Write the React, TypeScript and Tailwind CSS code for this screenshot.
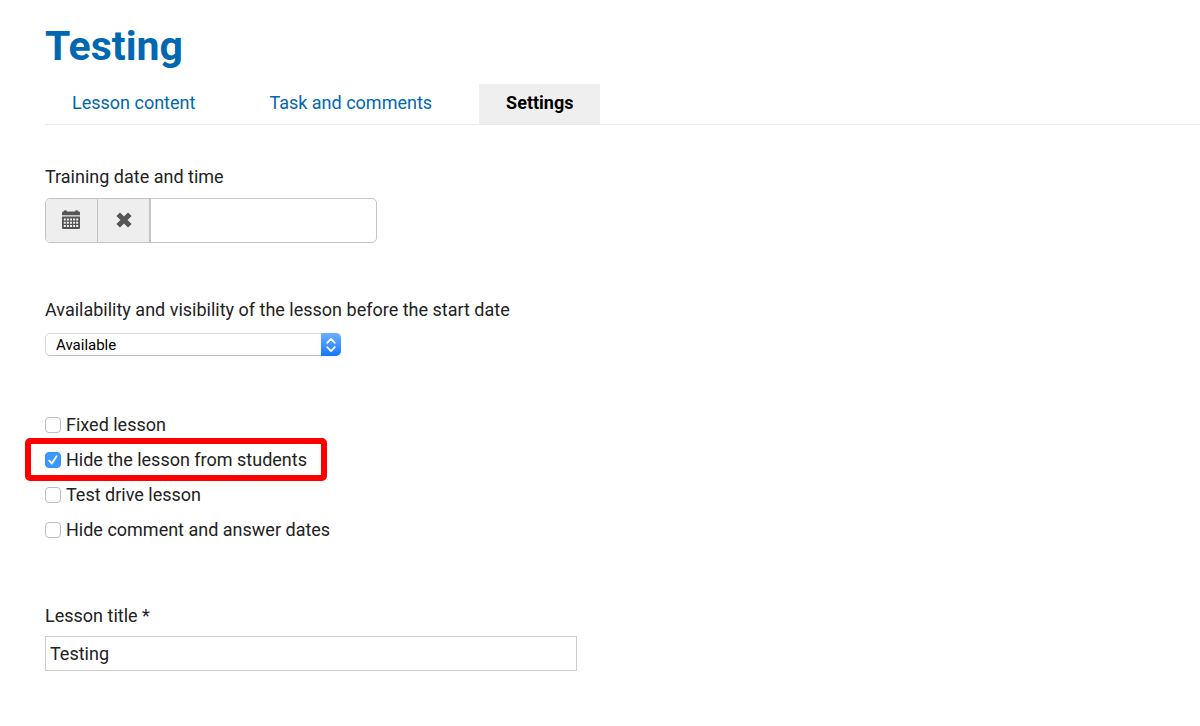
import { useState } from "react";

const tabs = ["Lesson content", "Task and comments", "Settings"];

const options = [
  { id: "fixed", label: "Fixed lesson", checked: false, highlight: false },
  { id: "hide-lesson", label: "Hide the lesson from students", checked: true, highlight: true },
  { id: "test-drive", label: "Test drive lesson", checked: false, highlight: false },
  { id: "hide-dates", label: "Hide comment and answer dates", checked: false, highlight: false },
];

function CalendarIcon() {
  return (
    <svg viewBox="0 0 18 20" className="h-5 w-[18px]" fill="#555" aria-hidden="true">
      <path d="M1.8 1.6Q1.8.2 3.4.2T5 1.6h8Q13 .2 14.6.2t1.6 1.4h.6q1.2 0 1.2 1.2v2.4H0V2.8q0-1.2 1.2-1.2z" />
      <path
        fillRule="evenodd"
        d="M0 6.5h18V18q0 1-1 1H1q-1 0-1-1zM1.8 8.6h2v2h-2zm3.1 0h2v2h-2zm3.1 0h2v2H8zm3.1 0h2v2h-2zm3.1 0h2v2h-2zM1.8 11.8h2v2h-2zm3.1 0h2v2h-2zm3.1 0h2v2H8zm3.1 0h2v2h-2zm3.1 0h2v2h-2zM1.8 15h2v2h-2zm3.1 0h2v2h-2zM8 15h2v2H8zm3.1 0h2v2h-2zm3.1 0h2v2h-2z"
      />
    </svg>
  );
}

function ClearIcon() {
  return (
    <svg viewBox="0 0 16 16" className="h-4 w-4" fill="none" stroke="#555" strokeWidth="5" aria-hidden="true">
      <path d="M2.2 2.2l11.6 11.6M13.8 2.2L2.2 13.8" />
    </svg>
  );
}

function TabBar() {
  const [active, setActive] = useState("Settings");

  return (
    <nav className="mt-[14px] flex gap-5 border-b border-[#ebebeb]">
      {tabs.map((tab) => (
        <a
          key={tab}
          href="#"
          onClick={() => setActive(tab)}
          className={
            tab === active
              ? "bg-[#efefef] px-[27px] pt-[7px] pb-[9px] font-bold text-black"
              : "px-[27px] pt-[7px] pb-[9px] text-[#0068b0]"
          }
        >
          {tab}
        </a>
      ))}
    </nav>
  );
}

function Option({ id, label, checked, highlight }: (typeof options)[number]) {
  return (
    <div className="relative flex h-[35px] w-fit items-center">
      {highlight && (
        <span className="pointer-events-none absolute -inset-x-5 -inset-y-1 rounded-[5px] border-[6px] border-[#ff0000]" />
      )}
      <span className="grid place-items-center">
        <input
          id={id}
          type="checkbox"
          defaultChecked={checked}
          className="peer col-start-1 row-start-1 h-4 w-4 appearance-none rounded-[4px] border border-[#bdbdbd] bg-white checked:border-[#3191f8] checked:bg-[#3b99fc]"
        />
        <svg
          viewBox="0 0 16 16"
          className="pointer-events-none invisible col-start-1 row-start-1 h-4 w-4 peer-checked:visible"
          fill="none"
          stroke="white"
          strokeWidth="1.8"
          strokeLinecap="round"
          strokeLinejoin="round"
          aria-hidden="true"
        >
          <path d="M4.2 8.6l2.6 3 4.8-7.4" />
        </svg>
      </span>
      <label htmlFor={id} className="pl-[5px]">
        {label}
      </label>
    </div>
  );
}

export default function App() {
  return (
    <main className="bg-white pt-[22px] pb-14 pl-[45px] font-[Roboto,sans-serif] text-[18px] leading-6 text-[#222]">
      <h1 className="text-[41px] leading-[48px] font-bold text-[#0068b0]">Testing</h1>
      <TabBar />

      <form>
        <div className="mt-10 flex flex-col items-start gap-[9px]">
          <label htmlFor="date">Training date and time</label>
          <div className="flex h-[45px] w-full max-w-[332px] overflow-hidden rounded-[5px] border border-[#c4c4c4]">
            <button
              type="button"
              aria-label="Pick date"
              className="flex w-[52px] shrink-0 items-center justify-center border-r border-[#c4c4c4] bg-[#eee] pr-px pb-px"
            >
              <CalendarIcon />
            </button>
            <button
              type="button"
              aria-label="Clear date"
              className="flex w-[53px] shrink-0 items-center justify-center border-r-2 border-[#c4c4c4] bg-[#eee] pb-px"
            >
              <ClearIcon />
            </button>
            <input id="date" type="text" className="min-w-0 flex-1 px-3 outline-none" />
          </div>
        </div>

        <div className="mt-[55px] flex flex-col items-start gap-[11px]">
          <label htmlFor="availability">Availability and visibility of the lesson before the start date</label>
          <div className="grid w-full max-w-[296px] items-center">
            <select
              id="availability"
              className="col-start-1 row-start-1 h-[23px] appearance-none rounded-[5px] border border-[#d9d9d9] border-b-[#bfbfbf] bg-white pl-[10px] text-[15px] leading-5 text-black"
            >
              <option>Available</option>
            </select>
            <span className="pointer-events-none relative col-start-1 row-start-1 flex h-[23px] w-5 items-center justify-center justify-self-end rounded-r-[5px] bg-linear-to-b from-[#6bb1f9] to-[#0a78fb]">
              <svg
                viewBox="0 0 10 16"
                className="h-4 w-[10px]"
                fill="none"
                stroke="white"
                strokeWidth="1.7"
                strokeLinecap="round"
                strokeLinejoin="round"
                aria-hidden="true"
              >
                <path d="M1.2 5.8L5 1.8l3.8 4M1.2 10.2l3.8 4 3.8-4" />
              </svg>
            </span>
          </div>
        </div>

        <div className="mt-[51px]">
          {options.map((option) => (
            <Option key={option.id} {...option} />
          ))}
        </div>

        <div className="mt-[57px] flex flex-col items-start gap-2">
          <label htmlFor="title">Lesson title *</label>
          <input
            id="title"
            type="text"
            defaultValue="Testing"
            className="h-[35px] w-full max-w-[532px] border border-[#ccc] px-1 pb-px outline-none"
          />
        </div>
      </form>
    </main>
  );
}
